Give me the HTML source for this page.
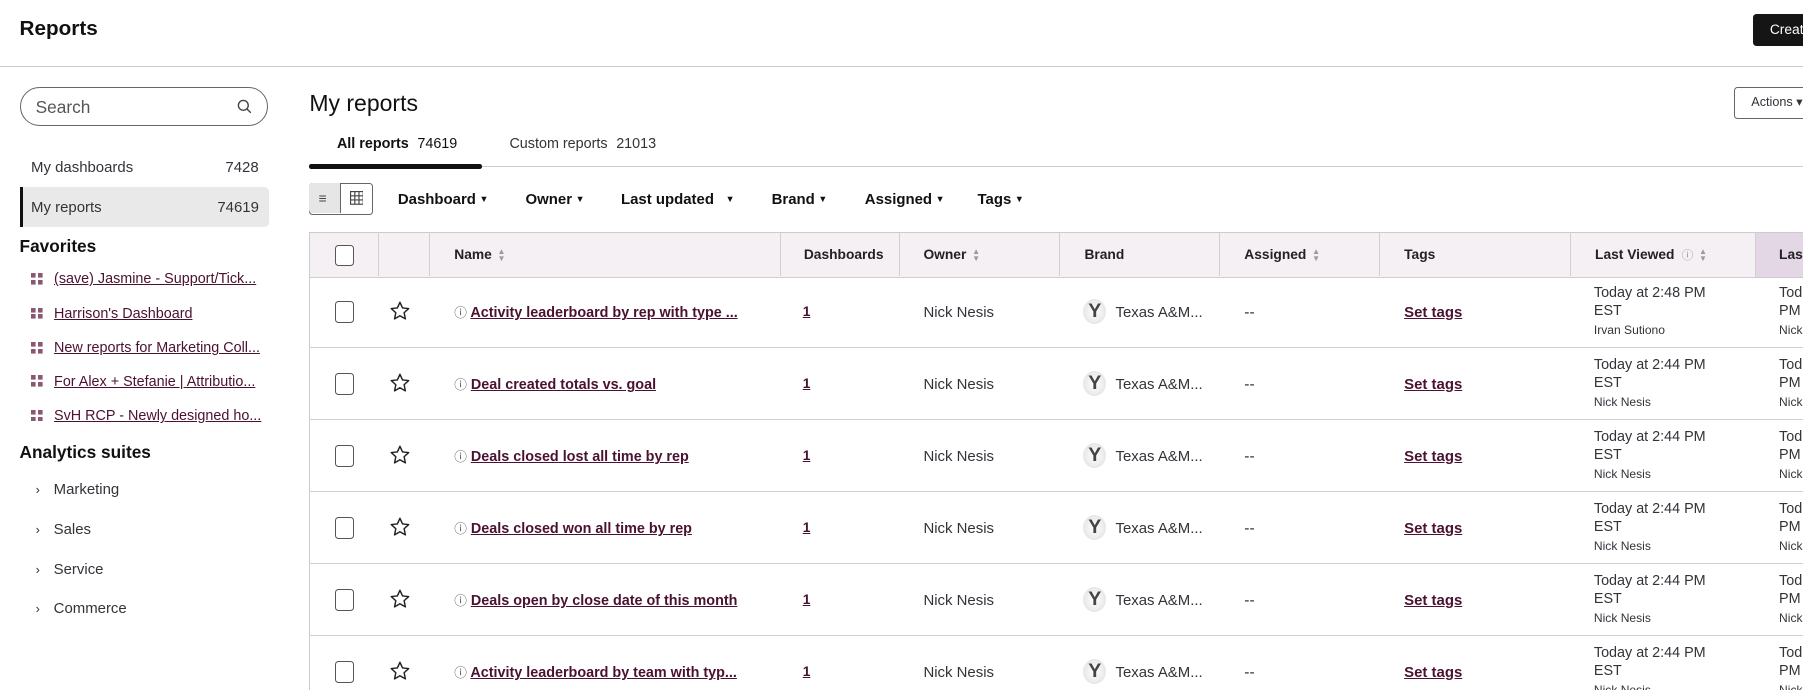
<!DOCTYPE html>
<html><head><meta charset="utf-8"><style>
html,body{margin:0;padding:0;background:#fff;overflow:hidden}
body{width:1803px;height:690px}
#p{zoom:1.15;width:1568px;height:600px;position:relative;font-family:"Liberation Sans",sans-serif;color:#33333a;overflow:hidden}
.a{position:absolute;white-space:nowrap}
.lnk{color:#4a1130;text-decoration:underline}
.b{font-weight:bold}
.cb{position:absolute;width:15px;height:17px;border:1px solid #555;border-radius:3px;background:#fff}
.hd{position:absolute;top:202px;height:38px;background:#f5f0f4;border-top:1px solid #ccc;border-bottom:1px solid #ccc}
.vl{position:absolute;top:202px;height:38px;width:1px;background:#d0d0d0}
.hl{position:absolute;left:269px;right:0;height:1px;background:#d0d0d0}
.ht{position:absolute;top:215px;font-size:12px;color:#222;font-weight:bold;line-height:14px}
.r{position:absolute;font-size:13.5px}
.sort{font-size:7px;color:#999;line-height:6px;display:inline-block;vertical-align:middle;margin-left:5px}
.fav{position:absolute;left:27px;font-size:13px}
.fav i{display:inline-block;width:10px;height:10px;margin-right:10px;vertical-align:-1px;background:
linear-gradient(#7a3a5a,#7a3a5a) 0 0/4px 4px no-repeat,linear-gradient(#7a3a5a,#7a3a5a) 6px 0/4px 4px no-repeat,linear-gradient(#7a3a5a,#7a3a5a) 0 6px/4px 4px no-repeat,linear-gradient(#7a3a5a,#7a3a5a) 6px 6px/4px 4px no-repeat;opacity:.85}
.car{font-size:8px;margin-left:3px;vertical-align:2px}
</style></head><body><div id="p">
<div class="a b" style="left:17px;top:15px;font-size:18px;color:#111">Reports</div>
<div class="a" style="left:1524px;top:12px;width:60px;height:28px;background:#151515;border-radius:3px;color:#fff;font-size:12px;line-height:28px;padding-left:15px">Create</div>
<div class="a" style="left:0;right:0;top:57px;height:1px;background:#ccc"></div>

<div class="a" style="left:17px;top:76px;width:214px;height:32px;border:1px solid #666;border-radius:17px"></div>
<div class="a" style="left:31px;top:84px;font-size:15px;color:#555">Search</div>
<svg class="a" style="left:206px;top:86px" width="13" height="13" viewBox="0 0 13 13"><circle cx="5.5" cy="5.5" r="4.3" fill="none" stroke="#444" stroke-width="1.2"/><path d="M8.7 8.7L12 12" stroke="#444" stroke-width="1.2"/></svg>
<div class="a" style="left:27px;top:138px;font-size:13px">My dashboards</div>
<div class="a" style="left:196px;top:138px;font-size:13px">7428</div>
<div class="a" style="left:17px;top:163px;width:217px;height:34px;background:#e9e9e9;border-radius:0 4px 4px 0"></div>
<div class="a" style="left:17px;top:163px;width:3px;height:34px;background:#111"></div>
<div class="a" style="left:27px;top:173px;font-size:13px">My reports</div>
<div class="a" style="left:189px;top:173px;font-size:13px">74619</div>
<div class="a b" style="left:17px;top:205px;font-size:15px;color:#111">Favorites</div>
<div class="fav" style="top:236px;font-size:12.5px"><i></i><span class="lnk">(save) Jasmine - Support/Tick...</span></div>
<div class="fav" style="top:266px;font-size:12.5px"><i></i><span class="lnk">Harrison's Dashboard</span></div>
<div class="fav" style="top:296px;font-size:12.5px"><i></i><span class="lnk">New reports for Marketing Coll...</span></div>
<div class="fav" style="top:325px;font-size:12.5px"><i></i><span class="lnk">For Alex + Stefanie | Attributio...</span></div>
<div class="fav" style="top:355px;font-size:12.5px"><i></i><span class="lnk">SvH RCP - Newly designed ho...</span></div>
<div class="a b" style="left:17px;top:384px;font-size:15px;color:#111">Analytics suites</div>
<div class="a" style="left:31px;top:418px;font-size:13px"><span style="font-size:11px;margin-right:12px">›</span>Marketing</div>
<div class="a" style="left:31px;top:453px;font-size:13px"><span style="font-size:11px;margin-right:12px">›</span>Sales</div>
<div class="a" style="left:31px;top:488px;font-size:13px"><span style="font-size:11px;margin-right:12px">›</span>Service</div>
<div class="a" style="left:31px;top:522px;font-size:13px"><span style="font-size:11px;margin-right:12px">›</span>Commerce</div>

<div class="a" style="left:269px;top:78px;font-size:20px;color:#111">My reports</div>
<div class="a" style="left:1508px;top:76px;width:70px;height:26px;border:1px solid #666;border-radius:3px;font-size:11px;line-height:26px;padding-left:14px">Actions ▾</div>
<div class="a b" style="left:293px;top:118px;font-size:12.5px;color:#111">All reports <span style="font-weight:normal;margin-left:4px">74619</span></div>
<div class="a" style="left:443px;top:118px;font-size:12.5px">Custom reports <span style="margin-left:4px">21013</span></div>
<div class="a" style="left:269px;top:144px;right:0;height:1px;background:#ccc"></div>
<div class="a" style="left:269px;top:143px;width:150px;height:4px;background:#111;border-radius:2px"></div>

<div class="a" style="left:269px;top:159px;width:54px;height:26px;border:1px solid #666;border-radius:3px"></div>
<div class="a" style="left:269px;top:159px;width:27px;height:26px;background:#e6e6e6;border-right:1px solid #666;border-radius:3px 0 0 3px"></div>
<div class="a" style="left:277px;top:166px;font-size:12px;color:#444">≡</div>
<svg class="a" style="left:304px;top:166px" width="12" height="12"><rect x=".5" y=".5" width="11" height="11" fill="none" stroke="#444"/><path d="M.5 4.2h11M.5 7.8h11M4.2 .5v11M7.8 .5v11" stroke="#444"/></svg>
<div class="a b" style="left:346px;top:166px;font-size:13px;color:#111">Dashboard<span class="car">▼</span></div>
<div class="a b" style="left:457px;top:166px;font-size:13px;color:#111">Owner<span class="car">▼</span></div>
<div class="a b" style="left:540px;top:166px;font-size:13px;color:#111">Last updated<span class="car" style="margin-left:10px">▼</span></div>
<div class="a b" style="left:671px;top:166px;font-size:13px;color:#111">Brand<span class="car">▼</span></div>
<div class="a b" style="left:752px;top:166px;font-size:13px;color:#111">Assigned<span class="car">▼</span></div>
<div class="a b" style="left:850px;top:166px;font-size:13px;color:#111">Tags<span class="car">▼</span></div>

<div class="hd" style="left:269px;width:1257px;border-left:1px solid #ccc"></div>
<div class="hd" style="left:1526px;width:50px;background:#e3d7e6"></div>
<div class="vl" style="left:329px"></div><div class="vl" style="left:373px"></div><div class="vl" style="left:678px"></div><div class="vl" style="left:782px"></div><div class="vl" style="left:921px"></div><div class="vl" style="left:1060px"></div><div class="vl" style="left:1199px"></div><div class="vl" style="left:1365px"></div><div class="vl" style="left:1526px"></div>
<div class="a" style="left:269px;top:240px;width:1px;height:360px;background:#ccc"></div>
<div class="cb" style="left:291px;top:213px"></div>
<div class="ht" style="left:395px">Name<span class="sort">▲<br>▼</span></div>
<div class="ht" style="left:699px">Dashboards</div>
<div class="ht" style="left:803px">Owner<span class="sort">▲<br>▼</span></div>
<div class="ht" style="left:943px">Brand</div>
<div class="ht" style="left:1082px">Assigned<span class="sort">▲<br>▼</span></div>
<div class="ht" style="left:1221px">Tags</div>
<div class="ht" style="left:1387px">Last Viewed <span style="font-weight:normal;color:#999;font-size:10px;margin-left:3px">ⓘ</span><span class="sort">▲<br>▼</span></div>
<div class="ht" style="left:1547px">Last</div>

<div id="rows"></div>
<script>
var names=["Activity leaderboard by rep with type ...","Deal created totals vs. goal","Deals closed lost all time by rep","Deals closed won all time by rep","Deals open by close date of this month","Activity leaderboard by team with typ..."];
var h="";
for(var i=0;i<6;i++){var t=240+i*62.6,c=t+31;
h+='<div class="hl" style="top:'+(t+62)+'px"></div>';
h+='<div class="cb" style="left:291px;top:'+(c-9)+'px"></div>';
h+='<svg class="a" style="left:338px;top:'+(c-10)+'px" width="19" height="19" viewBox="0 0 24 24"><path d="M12 2.5l2.9 6.2 6.7.7-5 4.6 1.4 6.7L12 17.3l-5.9 3.4 1.4-6.7-5-4.6 6.7-.7z" fill="none" stroke="#222" stroke-width="1.6" stroke-linejoin="round"/></svg>';
h+='<div class="r b" style="left:395px;top:'+(c-8)+'px;font-size:12.5px"><span style="font-weight:normal;color:#555;font-size:11px">ⓘ</span> <span class="lnk">'+names[i]+'</span></div>';
h+='<div class="r b lnk" style="left:698px;top:'+(c-7)+'px;font-size:12px">1</div>';
h+='<div class="r" style="left:803px;top:'+(c-7)+'px;font-size:13px">Nick Nesis</div>';
h+='<div class="a" style="left:942px;top:'+(c-11)+'px;width:20px;height:22px;border-radius:50%;background:radial-gradient(#fff,#ddd);font:bold 17px/22px \'Liberation Sans\';color:#444;text-align:center">Y</div>';
h+='<div class="r" style="left:970px;top:'+(c-7)+'px;font-size:13px">Texas A&amp;M...</div>';
h+='<div class="r" style="left:1082px;top:'+(c-7)+'px">--</div>';
h+='<div class="r b lnk" style="left:1221px;top:'+(c-7)+'px;font-size:13px">Set tags</div>';
h+='<div class="a" style="left:1386px;top:'+(c-24)+'px;font-size:12.5px;line-height:16px">Today at '+(i?'2:44':'2:48')+' PM<br>EST<br><span style="font-size:10.5px">'+(i?'Nick Nesis':'Irvan Sutiono')+'</span></div>';
h+='<div class="a" style="left:1547px;top:'+(c-24)+'px;font-size:12.5px;line-height:16px">Tod<br>PM<br><span style="font-size:10.5px">Nick</span></div>';
}
document.getElementById("rows").innerHTML=h;
</script>
</div></body></html>
